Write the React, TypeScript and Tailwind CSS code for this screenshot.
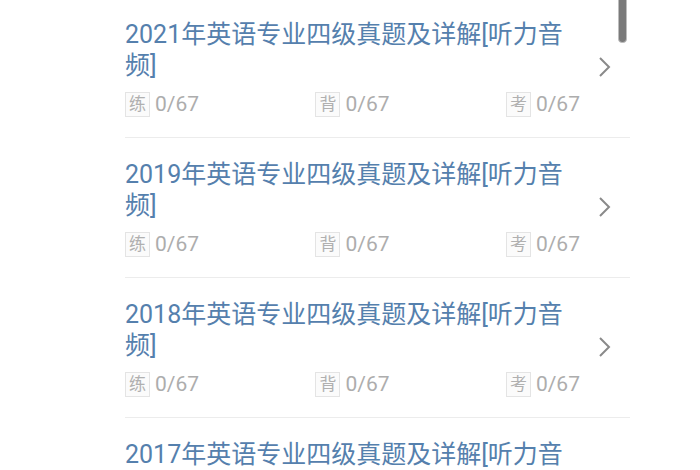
import React from "react";

const items = ["2021", "2019", "2018", "2017"];

function Tag({ ch }: { ch: string }) {
  return (
    <div className="flex items-center gap-[5px]">
      <span className="flex h-[25px] w-[25px] items-center justify-center border border-[#e4e4e4] bg-[#fbfbfb] text-[17px] leading-none text-[#b0b0b0]">
        {ch}
      </span>
      <span className="text-[21px] leading-none text-[#adadad]">0/67</span>
    </div>
  );
}

export default function App() {
  return (
    <div
      className="relative h-[470px] w-[700px] overflow-hidden bg-white"
      style={{ fontFamily: 'Roboto, "Noto Sans CJK SC", "Noto Sans", sans-serif' }}
    >
      <div className="ml-[125px] mt-[-2px] w-[505px]">
        {items.map((y) => (
          <div
            key={y}
            className="flex h-[140px] items-center border-b border-[#ececec] pr-[18px]"
          >
            <div className="flex h-full flex-1 flex-col pt-[21px]">
              <div className="w-[445px] text-[25px] leading-[31px] text-[#5580ad]">
                {y}年英语专业四级真题及详解[听力音频]
              </div>
              <div className="mt-[11px] flex w-[455px] justify-between">
                <Tag ch="练" />
                <Tag ch="背" />
                <Tag ch="考" />
              </div>
            </div>
            <svg width="14" height="22" viewBox="0 0 14 22" className="mb-[2px]">
              <path d="M2 2 L11 11 L2 20" fill="none" stroke="#8a8a8a" strokeWidth="2" />
            </svg>
          </div>
        ))}
      </div>
      <div className="absolute left-[618px] top-[-6px] h-[49px] w-[9px] rounded-[4px] border border-[#bdbdbd] bg-[#7a7a7a]" />
    </div>
  );
}
